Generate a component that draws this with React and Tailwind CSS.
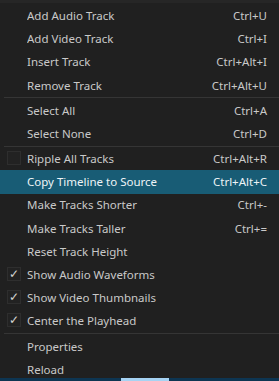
import React from 'react';

const groups = [
  [
    { label: 'Add Audio Track', keys: 'Ctrl+U' },
    { label: 'Add Video Track', keys: 'Ctrl+I' },
    { label: 'Insert Track', keys: 'Ctrl+Alt+I' },
    { label: 'Remove Track', keys: 'Ctrl+Alt+U' },
  ],
  [
    { label: 'Select All', keys: 'Ctrl+A' },
    { label: 'Select None', keys: 'Ctrl+D' },
  ],
  [
    { label: 'Ripple All Tracks', keys: 'Ctrl+Alt+R', check: 'off' },
    { label: 'Copy Timeline to Source', keys: 'Ctrl+Alt+C', active: true },
    { label: 'Make Tracks Shorter', keys: 'Ctrl+-' },
    { label: 'Make Tracks Taller', keys: 'Ctrl+=' },
    { label: 'Reset Track Height' },
    { label: 'Show Audio Waveforms', check: 'on' },
    { label: 'Show Video Thumbnails', check: 'on' },
    { label: 'Center the Playhead', check: 'on' },
  ],
  [{ label: 'Properties' }, { label: 'Reload' }],
];

const Row = ({ item }) => (
  <div
    className={
      'relative flex items-center h-[23.2px] shrink-0 pl-[27px] pr-[12px] ' +
      (item.active ? 'bg-[#185c75] text-[#eef4f7]' : 'text-[#c9c9c9]')
    }
  >
    {item.check && (
      <span className="absolute left-[7px] top-[4px] w-[14px] h-[14px] border border-[#2e2e2e] bg-[#222222] flex items-center justify-center text-[12px] leading-none text-[#d2d2d2]">
        {item.check === 'on' ? '✓' : ''}
      </span>
    )}
    <span className="flex-1 truncate">{item.label}</span>
    {item.keys && <span>{item.keys}</span>}
  </div>
);

export default function App() {
  return (
    <div
      className="w-[279px] h-[381px] overflow-hidden bg-[#202020] flex flex-col text-[11.5px]"
      style={{ fontFamily: '"Noto Sans", "Open Sans", sans-serif' }}
    >
      <div className="h-[3px] bg-[#262626] shrink-0" />
      <div className="pt-[1px] flex flex-col flex-1 min-h-0">
        {groups.map((g, gi) => (
          <React.Fragment key={gi}>
            {gi > 0 && (
              <div className="h-[2px] shrink-0 flex items-center pl-[4px]">
                <div className="h-px w-full bg-[#353535]" />
              </div>
            )}
            {g.map((item) => (
              <Row key={item.label} item={item} />
            ))}
          </React.Fragment>
        ))}
      </div>
      <div className="h-[3px] shrink-0 bg-[#0d3552] flex">
        <div className="w-[121px]" />
        <div className="w-[48px] bg-[#a6d3f3]" />
      </div>
    </div>
  );
}
